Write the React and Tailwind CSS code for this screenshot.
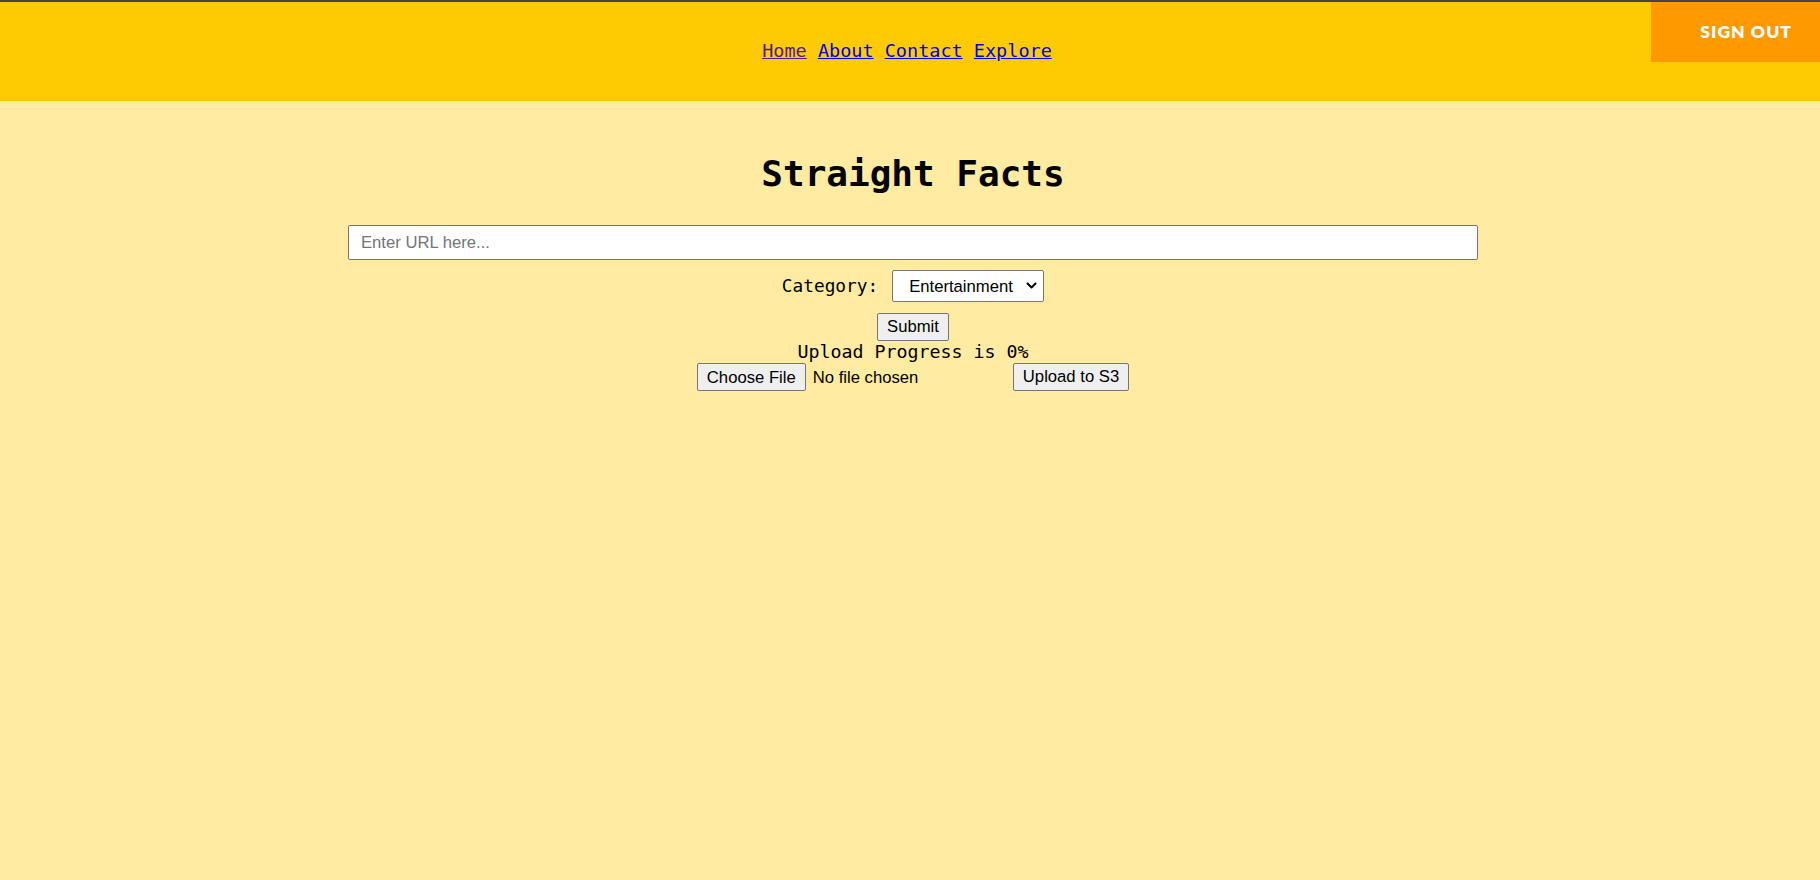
import { useState } from 'react';

const mono = { fontFamily: '"DejaVu Sans Mono", "Liberation Mono", monospace' };

export default function App() {
  const [url, setUrl] = useState('');
  const [category, setCategory] = useState('Entertainment');

  return (
    <div className="min-h-screen bg-[#ffeba1] font-['Liberation_Sans',Arial,sans-serif] text-black">
      {/* Header */}
      <header className="relative h-[101px] border-t-2 border-[#444444] bg-[#fecb02] flex items-center justify-center">
        <nav className="mr-[6px] font-['DejaVu_Sans_Mono','Liberation_Mono',monospace] text-[18.5px] leading-none">
          <a href="#" className="underline text-[#551a8b]">Home</a>{' '}
          <a href="#" className="underline text-[#0000ee]">About</a>{' '}
          <a href="#" className="underline text-[#0000ee]">Contact</a>{' '}
          <a href="#" className="underline text-[#0000ee]">Explore</a>
        </nav>
        <button className="absolute top-0 right-0 w-[169px] h-[60px] bg-[#ff9900] text-white font-['Lato',sans-serif] font-extrabold text-[17.5px] tracking-[0.06em] uppercase flex items-center justify-end pr-[28px]">
          Sign out
        </button>
      </header>

      {/* Main */}
      <main className="flex flex-col items-center pl-[6px]">
        <h1 className="mt-[51px] h-[44px] leading-[44px] text-[36px] font-bold" style={mono}>
          Straight Facts
        </h1>

        <input
          type="text"
          value={url}
          onChange={e => setUrl(e.target.value)}
          placeholder="Enter URL here..."
          className="mt-[29px] w-[1130px] h-[35px] bg-white border border-[#767676] rounded-[2px] px-[12px] text-[16.67px] placeholder:text-[#757575] outline-none"
        />

        <div className="mt-[10px] h-[32px] flex items-center">
          <label className="text-[17.8px] mr-[14px]" style={mono}>Category:</label>
          <div className="relative">
            <select
              value={category}
              onChange={e => setCategory(e.target.value)}
              className="block w-[152px] h-[32px] bg-white border border-[#767676] rounded-[2px] pl-[16px] text-[16.67px] appearance-none outline-none"
            >
              <option>Entertainment</option>
              <option>Politics</option>
              <option>Sports</option>
              <option>Science</option>
            </select>
            <svg className="pointer-events-none absolute right-[7px] top-[12px]" width="11" height="8" viewBox="0 0 11 8" fill="none">
              <path d="M1.5 1.5 L5.5 5.5 L9.5 1.5" stroke="#000" strokeWidth="2" strokeLinecap="round" strokeLinejoin="round" />
            </svg>
          </div>
        </div>

        <button className="mt-[11px] h-[28px] px-[9px] bg-[#efefef] border border-[#767676] rounded-[2px] text-[16.67px] leading-none">
          Submit
        </button>

        <p className="h-[22px] leading-[22px] text-[18.3px]" style={mono}>Upload Progress is 0%</p>

        <div className="h-[28px] flex items-center">
          <input
            type="file"
            className="w-[311px] text-[16.67px] file:h-[28px] file:px-[9px] file:mr-[7px] file:bg-[#efefef] file:border file:border-[#767676] file:rounded-[2px]"
          />
          <button className="ml-[5px] h-[28px] px-[9px] bg-[#efefef] border border-[#767676] rounded-[2px] text-[16.67px] leading-none">
            Upload to S3
          </button>
        </div>
      </main>
    </div>
  );
}
